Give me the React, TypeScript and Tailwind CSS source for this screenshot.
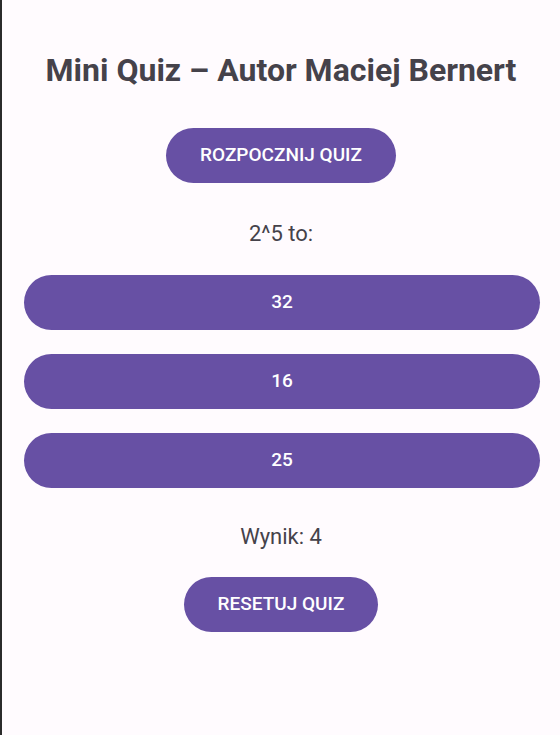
import React from "react";

export default function App() {
  const answers = ["32", "16", "25"];
  return (
    <div
      className="min-h-[735px] w-full bg-[#fffbfe] border-l-2 border-[#2b2b2b] flex flex-col items-center"
      style={{ fontFamily: "Roboto, 'Noto Sans', sans-serif" }}
    >
      <h1 className="mt-[51px] text-[32px] leading-[38px] font-bold text-[#45424a]">
        Mini Quiz – Autor Maciej Bernert
      </h1>
      <button className="mt-[39px] h-[55px] px-[34px] rounded-full bg-[#6750a4] text-white text-[19px] font-medium">
        ROZPOCZNIJ QUIZ
      </button>
      <p className="mt-[37px] text-[22px] leading-[28px] text-[#45424a]">2^5 to:</p>
      <div className="mt-[27px] w-full pl-[22px] pr-[20px] flex flex-col gap-[24px]">
        {answers.map((a) => (
          <button
            key={a}
            className="h-[55px] w-full rounded-full bg-[#6750a4] text-white text-[19px] font-medium"
          >
            {a}
          </button>
        ))}
      </div>
      <p className="mt-[35px] text-[22px] leading-[28px] text-[#45424a]">Wynik: 4</p>
      <button className="mt-[26px] h-[55px] px-[34px] rounded-full bg-[#6750a4] text-white text-[19px] font-medium">
        RESETUJ QUIZ
      </button>
    </div>
  );
}
